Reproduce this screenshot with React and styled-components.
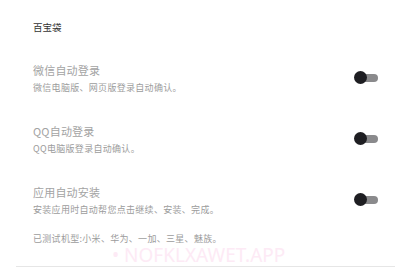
import React from 'react';
import styled, { createGlobalStyle } from 'styled-components';

const items = [
    { title: '微信自动登录', desc: '微信电脑版、网页版登录自动确认。' },
    { title: 'QQ自动登录', desc: 'QQ电脑版登录自动确认。' },
    { title: '应用自动安装', desc: '安装应用时自动帮您点击继续、安装、完成。' },
];

function App() {
    return (
        <>
            <GlobalStyle />
            <Page>
                <Header>百宝袋</Header>
                <List>
                    {items.map((item, index) => (
                        <Row key={index}>
                            <ItemText>
                                <Title>{item.title}</Title>
                                <Desc>{item.desc}</Desc>
                            </ItemText>
                            <Switch>
                                <Knob />
                            </Switch>
                        </Row>
                    ))}
                </List>
                <Note>已测试机型:小米、华为、一加、三星、魅族。</Note>
                <Watermark>• NOFKLXAWET.APP</Watermark>
                <Divider />
            </Page>
        </>
    )
}

export default App;

const GlobalStyle = createGlobalStyle`
    body {
        margin: 0;
        background: #fff;
        font-family: "Noto Sans CJK SC", "Noto Sans", sans-serif;
    }
`

const Page = styled.div`
    position: relative;
    width: 395px;
    height: 273px;
    overflow: hidden;
    padding-top: 20px;
    box-sizing: border-box;
`

const Header = styled.div`
    padding-left: 33px;
    font-size: 9.5px;
    line-height: 14px;
    color: #333;
`

const List = styled.div`
    display: flex;
    flex-direction: column;
    gap: 29px;
    margin-top: 28px;
    padding: 0 17px 0 33px;
`

const Row = styled.div`
    display: flex;
    justify-content: space-between;
    align-items: center;
`

const ItemText = styled.div`
    display: flex;
    flex-direction: column;
    gap: 3px;
`

const Title = styled.div`
    font-size: 11px;
    line-height: 16px;
    color: #a3a3a3;
    letter-spacing: 0.2px;
`

const Desc = styled.div`
    font-size: 9px;
    line-height: 13px;
    color: #9c9c9c;
    letter-spacing: 0.3px;
`

const Switch = styled.div`
    position: relative;
    width: 21px;
    height: 8px;
    border-radius: 4px;
    background: #8a8a8c;
`

const Knob = styled.div`
    position: absolute;
    left: -3px;
    top: -3px;
    width: 13px;
    height: 13px;
    border-radius: 50%;
    background: #1e1e22;
`

const Note = styled.div`
    margin-top: 17px;
    padding-left: 33px;
    font-size: 9px;
    line-height: 11px;
    color: #9c9c9c;
    letter-spacing: 0.3px;
`

const Watermark = styled.div`
    position: absolute;
    left: 112px;
    top: 250px;
    font-family: "Noto Sans", sans-serif;
    font-size: 19px;
    line-height: 10px;
    color: #fdeaf5;
    white-space: nowrap;
`

const Divider = styled.div`
    margin: 22px 0 0 16px;
    height: 1px;
    background: #e6e6e6;
`
